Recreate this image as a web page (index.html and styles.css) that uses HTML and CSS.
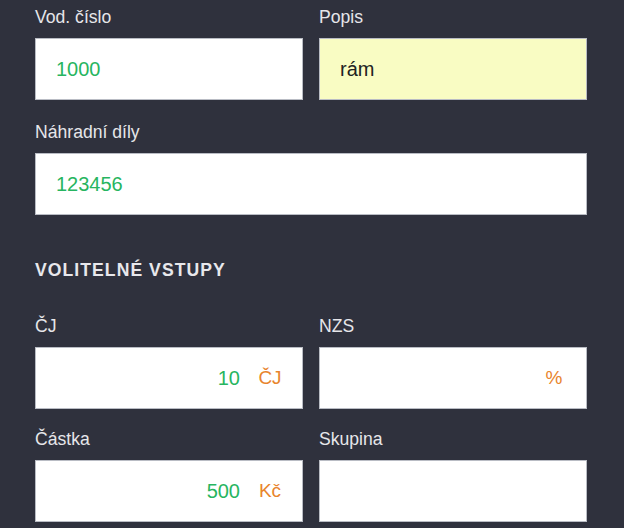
FILE: index.html
```html
<!DOCTYPE html>
<html lang="cs">
<head>
<meta charset="utf-8">
<title>Formulář</title>
<link rel="stylesheet" href="styles.css">
</head>
<body>
<form class="form">
  <div class="grid grid-top">
    <div class="field">
      <label class="label">Vod. číslo</label>
      <div class="box"><span class="val val-green">1000</span></div>
    </div>
    <div class="field">
      <label class="label">Popis</label>
      <div class="box box-yellow"><span class="val val-dark">rám</span></div>
    </div>
    <div class="field span2">
      <label class="label">Náhradní díly</label>
      <div class="box"><span class="val val-green">123456</span></div>
    </div>
  </div>

  <h2 class="heading">VOLITELNÉ VSTUPY</h2>

  <div class="grid grid-opt">
    <div class="field">
      <label class="label">ČJ</label>
      <div class="box box-suffix"><span class="num">10</span><span class="suffix">ČJ</span></div>
    </div>
    <div class="field">
      <label class="label">NZS</label>
      <div class="box box-suffix"><span class="num"></span><span class="suffix">%</span></div>
    </div>
    <div class="field">
      <label class="label">Částka</label>
      <div class="box box-suffix"><span class="num">500</span><span class="suffix">Kč</span></div>
    </div>
    <div class="field">
      <label class="label">Skupina</label>
      <div class="box"></div>
    </div>
  </div>
</form>
</body>
</html>
```

FILE: styles.css
```css
html, body {
  margin: 0;
  padding: 0;
}
body {
  background: #2f313d;
  font-family: "Liberation Sans", Arial, sans-serif;
  width: 624px;
  height: 528px;
  overflow: hidden;
}
.form {
  padding: 7px 0 0 35px;
  width: 552px;
}
.grid {
  display: grid;
  grid-template-columns: 268px 268px;
  column-gap: 16px;
}
.grid-top {
  row-gap: 22px;
}
.grid-opt {
  row-gap: 20px;
}
.span2 {
  grid-column: 1 / span 2;
}
.field {
  display: flex;
  flex-direction: column;
}
.label {
  display: block;
  color: #e6e6ea;
  font-size: 17.6px;
  line-height: 20px;
  height: 20px;
  margin-bottom: 11px;
}
.box {
  box-sizing: border-box;
  height: 62px;
  background: #ffffff;
  border: 1px solid #b9bcc4;
  display: flex;
  align-items: center;
  padding: 0 20px;
}
.box-yellow {
  background: #f9fcc3;
}
.val {
  font-size: 20px;
  line-height: 24px;
}
.val-green {
  color: #27b560;
}
.val-dark {
  color: #222222;
}
.heading {
  margin: 45px 0 36px 0;
  color: #e8e8ec;
  font-size: 17.6px;
  line-height: 20px;
  font-weight: bold;
  letter-spacing: 1.05px;
}
.box-suffix {
  padding: 0 10px 0 20px;
}
.num {
  flex: 1;
  text-align: right;
  color: #27b560;
  font-size: 20px;
  line-height: 24px;
  margin-right: 8px;
}
.suffix {
  width: 44px;
  text-align: center;
  color: #e8842c;
  font-size: 19px;
  line-height: 24px;
}
```
